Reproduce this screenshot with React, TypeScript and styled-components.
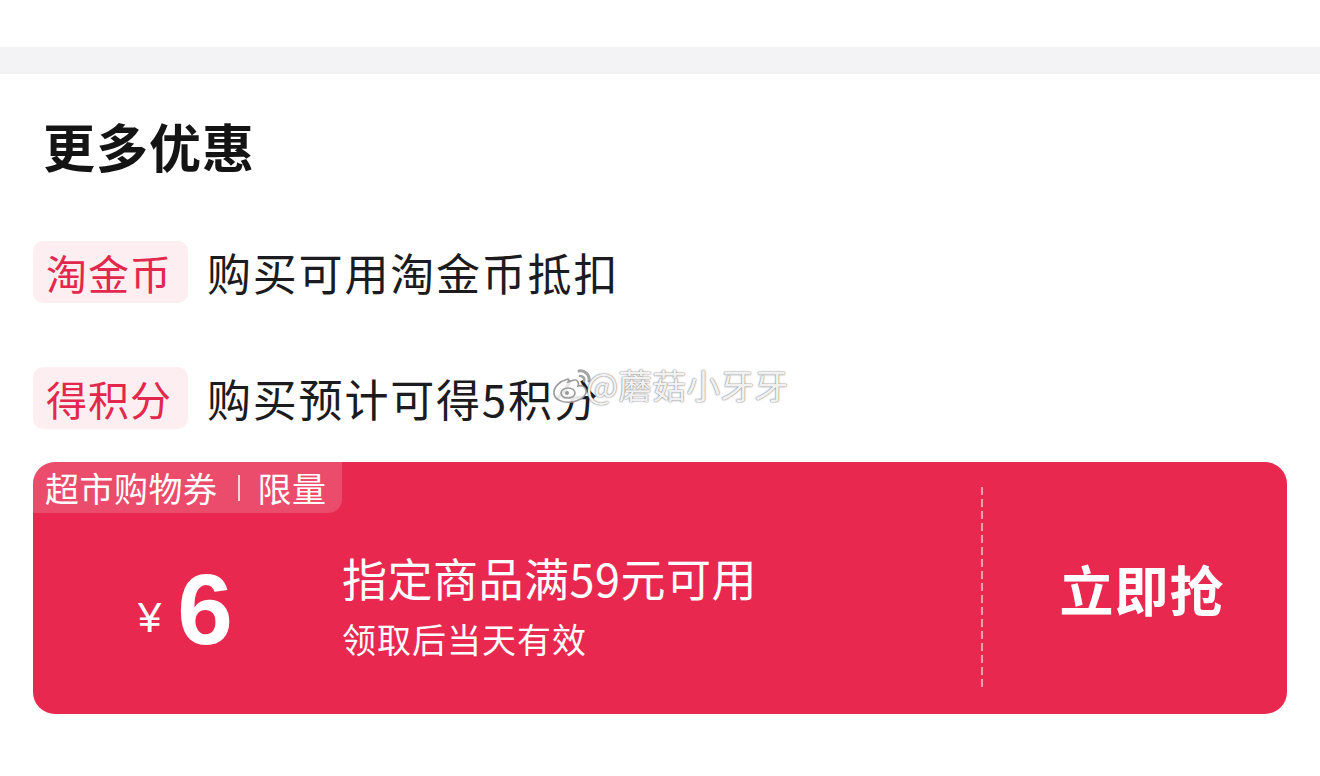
import * as React from "react";
import styled, { createGlobalStyle } from "styled-components";

const GlobalStyle = createGlobalStyle`
  html, body {
    margin: 0;
    padding: 0;
    background: #ffffff;
    font-family: "Noto Sans CJK SC", "Noto Sans", sans-serif;
  }
`;

const Page = styled.div`
  position: relative;
  width: 1320px;
  height: 776px;
  overflow: hidden;
  background: #ffffff;
  padding-top: 47px;
  box-sizing: border-box;
`;

const Divider = styled.div`
  height: 27px;
  background: #f3f3f5;
`;

const Section = styled.div`
  padding: 0 33px;
`;

const Title = styled.h2`
  margin: 42px 0 0 10px;
  font-size: 52px;
  line-height: 60px;
  font-weight: 700;
  color: #141414;
  letter-spacing: 1px;
`;

const Row = styled.div<{ $top: number }>`
  display: flex;
  align-items: center;
  margin-top: ${(p) => p.$top}px;
  height: 62px;
`;

const Tag = styled.span`
  display: flex;
  align-items: center;
  height: 62px;
  padding: 0 16px 0 13px;
  border-radius: 10px;
  background: #fdeff1;
  color: #e3284d;
  font-size: 41px;
  letter-spacing: 1px;
`;

const RowText = styled.span`
  margin-left: 19px;
  font-size: 44px;
  color: #1b1b20;
  letter-spacing: 1.8px;
`;

const Coupon = styled.div`
  position: relative;
  margin-top: 33px;
  height: 252px;
  border-radius: 22px;
  background: #e9284f;
  display: flex;
  color: #ffffff;
  overflow: hidden;
`;

const Badge = styled.div`
  position: absolute;
  top: 0;
  left: 0;
  height: 51px;
  padding: 0 15px 0 12px;
  display: flex;
  align-items: center;
  background: rgba(255, 255, 255, 0.17);
  border-bottom-right-radius: 14px;
  font-size: 34px;
  letter-spacing: 0.5px;
`;

const BadgeSep = styled.span`
  display: inline-block;
  width: 2px;
  height: 26px;
  margin: 0 18px 0 20px;
  background: rgba(255, 255, 255, 0.75);
`;

const Amount = styled.div`
  width: 309px;
  display: flex;
  align-items: center;
  justify-content: center;
  padding-top: 42px;
  padding-right: 4px;
  box-sizing: border-box;
`;

const Yen = styled.span`
  font-family: "Liberation Sans", sans-serif;
  font-size: 42px;
  font-weight: 400;
  margin-right: 16px;
  transform: translateY(9px);
`;

const Value = styled.span`
  font-family: "Liberation Sans", sans-serif;
  font-size: 100px;
  line-height: 100px;
  font-weight: 700;
`;

const Info = styled.div`
  flex: 1;
  display: flex;
  flex-direction: column;
  justify-content: center;
  padding-top: 34px;
`;

const InfoMain = styled.div`
  font-size: 45px;
  line-height: 56px;
  letter-spacing: 0.5px;
`;

const InfoSub = styled.div`
  margin-top: 11px;
  font-size: 34px;
  line-height: 44px;
  letter-spacing: 1px;
`;

const Dash = styled.div`
  align-self: center;
  width: 2px;
  height: 202px;
  background: repeating-linear-gradient(
    to bottom,
    rgba(255, 255, 255, 0.55) 0 8px,
    transparent 8px 12px
  );
`;

const Grab = styled.div`
  width: 304px;
  display: flex;
  align-items: center;
  justify-content: center;
  padding-left: 14px;
  box-sizing: border-box;
  font-size: 54px;
  font-weight: 700;
  letter-spacing: 1px;
`;

const Watermark = styled.div`
  position: absolute;
  left: 550px;
  top: 360px;
  display: flex;
  align-items: center;
  gap: 0;
  pointer-events: none;
  color: rgba(255, 255, 255, 0.92);
  font-size: 34px;
  text-shadow: 0 0 2px rgba(90, 90, 90, 0.7), 0 0 1px rgba(90, 90, 90, 0.7);
`;

const WatermarkText = styled.span`
  margin-left: -10px;
`;

function WeiboLogo() {
  return (
    <svg width="46" height="40" viewBox="0 0 46 40" fill="none">
      <path
        d="M18 14c-8 2-15 8-14 15 1 6 9 9 17 8 9-1 16-6 15-12-1-4-5-5-8-4 1-3 0-6-3-6-2 0-4 1-7 2 1-2 1-3 0-3z"
        fill="rgba(255,255,255,0.9)"
        stroke="#9a9a9a"
        strokeWidth="1.6"
      />
      <ellipse cx="18" cy="28" rx="7" ry="5" fill="none" stroke="#9a9a9a" strokeWidth="1.6" />
      <circle cx="17" cy="28" r="2" fill="#9a9a9a" />
      <path d="M29 6c6-1 11 4 10 10" stroke="#a5a5a5" strokeWidth="3" strokeLinecap="round" />
      <path d="M30 11c3 0 5 2 4 5" stroke="#a5a5a5" strokeWidth="2.6" strokeLinecap="round" />
    </svg>
  );
}

const App = () => {
  return (
    <Page>
      <GlobalStyle />
      <Divider />
      <Section>
        <Title>更多优惠</Title>
        <Row $top={65}>
          <Tag>淘金币</Tag>
          <RowText>购买可用淘金币抵扣</RowText>
        </Row>
        <Row $top={64}>
          <Tag>得积分</Tag>
          <RowText>购买预计可得5积分</RowText>
        </Row>
        <Coupon>
          <Badge>
            超市购物券
            <BadgeSep />
            限量
          </Badge>
          <Amount>
            <Yen>¥</Yen>
            <Value>6</Value>
          </Amount>
          <Info>
            <InfoMain>指定商品满59元可用</InfoMain>
            <InfoSub>领取后当天有效</InfoSub>
          </Info>
          <Dash />
          <Grab>立即抢</Grab>
        </Coupon>
      </Section>
      <Watermark>
        <WeiboLogo />
        <WatermarkText>@蘑菇小牙牙</WatermarkText>
      </Watermark>
    </Page>
  );
};

export default App;
